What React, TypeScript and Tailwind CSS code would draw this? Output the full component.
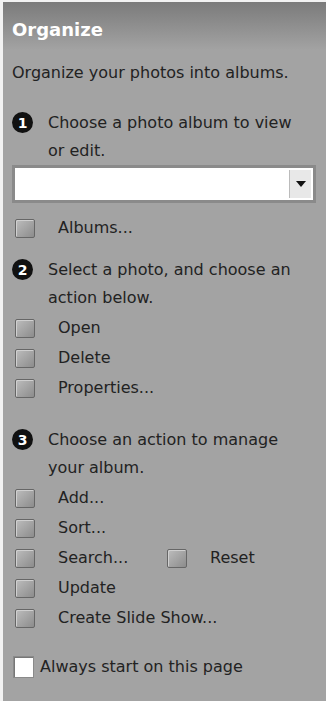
const font = { fontFamily: '"DejaVu Sans", Verdana, sans-serif' };

function Step({ n, lines }: { n: number; lines: string[] }) {
  return (
    <div className="flex">
      <div className="w-[36px] shrink-0 pt-[3px]">
        <div className="w-[21px] h-[21px] rounded-full bg-[#111] flex items-center justify-center text-white text-[14px] font-bold leading-none">
          {n}
        </div>
      </div>
      <div className="text-[16px] leading-[28px] text-[#222]">
        {lines.map((l) => (
          <div key={l}>{l}</div>
        ))}
      </div>
    </div>
  );
}

function Square() {
  return (
    <div className="w-[20px] h-[19px] rounded-[2px] border border-[#666] bg-gradient-to-br from-[#bdbdbd] to-[#8c8c8c] shadow-[inset_1px_1px_0_#d0d0d0]" />
  );
}

function Action({ label }: { label: string }) {
  return (
    <div className="flex items-center h-[30px] pl-[3px]">
      <Square />
      <span className="ml-[23px] text-[16px] text-[#222]">{label}</span>
    </div>
  );
}

export default function App() {
  return (
    <div className="w-[326px] h-[701px] bg-[#f2f2f2] pt-[2px] pl-[3px] flex" style={font}>
      <div className="flex-1 flex flex-col bg-[#a3a3a3]">
        {/* header */}
        <div className="h-[48px] shrink-0 bg-gradient-to-b from-[#7b7b7b] to-[#a3a3a3] pl-[9px] pt-[17px]">
          <span className="text-white font-bold text-[18px] leading-[22px]">Organize</span>
        </div>

        <div className="px-[9px]">
          <div className="mt-[13px] text-[16px] leading-[20px] text-[#222] whitespace-nowrap">Organize your photos into albums.</div>

          <div className="mt-[26px]">
            <Step n={1} lines={["Choose a photo album to view", "or edit."]} />
          </div>

          {/* dropdown */}
          <div className="h-[38px] mr-[1px] border-[3px] border-[#8a8a8a] bg-white flex justify-end">
            <div className="w-[22px] my-[2px] mr-[2px] bg-[#e8e8e8] border-l border-[#bbb] flex items-center justify-center">
              <div className="w-0 h-0 border-l-[5px] border-r-[5px] border-t-[6px] border-l-transparent border-r-transparent border-t-[#111]" />
            </div>
          </div>

          <div className="mt-[10px]">
            <Action label="Albums..." />
          </div>

          <div className="mt-[13px]">
            <Step n={2} lines={["Select a photo, and choose an", "action below."]} />
          </div>
          <div className="mt-[1px]">
            <Action label="Open" />
            <Action label="Delete" />
            <Action label="Properties..." />
          </div>

          <div className="mt-[23px]">
            <Step n={3} lines={["Choose an action to manage", "your album."]} />
          </div>
          <div className="mt-[1px]">
            <Action label="Add..." />
            <Action label="Sort..." />
            <div className="flex items-center h-[30px] pl-[3px]">
              <Square />
              <span className="ml-[23px] w-[109px] text-[16px] text-[#222]">Search...</span>
              <Square />
              <span className="ml-[23px] text-[16px] text-[#222]">Reset</span>
            </div>
            <Action label="Update" />
            <Action label="Create Slide Show..." />
          </div>

          <div className="mt-[22px] flex items-center h-[24px] pl-[1px]">
            <div className="w-[21px] h-[22px] bg-white border border-[#8a8a8a] shadow-[inset_1px_1px_0_#777]" />
            <span className="ml-[6px] text-[16px] text-[#222] whitespace-nowrap">Always start on this page</span>
          </div>
        </div>
      </div>
    </div>
  );
}
